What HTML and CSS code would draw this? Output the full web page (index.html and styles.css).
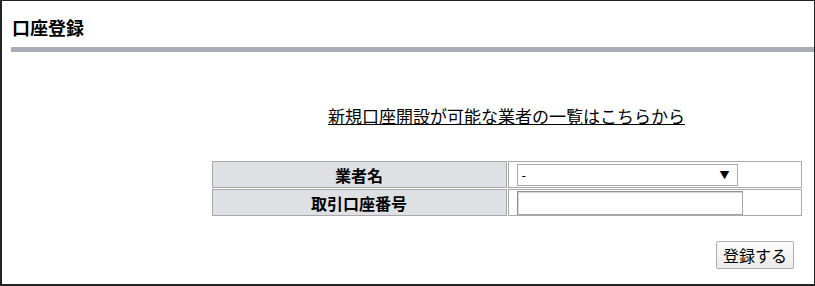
FILE: index.html
```html
<!DOCTYPE html>
<html lang="ja">
<head>
<meta charset="utf-8">
<title>口座登録</title>
<link rel="stylesheet" href="styles.css">
</head>
<body>
<div class="panel">
  <h1 class="title">口座登録</h1>
  <div class="bar"></div>
  <div class="main">
    <p class="link-row"><a class="link" href="#">新規口座開設が可能な業者の一覧はこちらから</a></p>
    <table class="form-table">
      <tr>
        <th class="label">業者名</th>
        <td class="field">
          <span class="select-wrap">
            <select class="select"><option>-</option></select>
            <span class="arrow">▼</span>
          </span>
        </td>
      </tr>
      <tr>
        <th class="label">取引口座番号</th>
        <td class="field"><input class="text-input" type="text"></td>
      </tr>
    </table>
  </div>
  <div class="actions">
    <button class="btn" type="button">登録する</button>
  </div>
</div>
</body>
</html>
```

FILE: styles.css
```css
html, body {
  margin: 0;
  padding: 0;
  background: #fff;
}

body {
  font-family: "Noto Sans CJK JP", "Noto Sans", sans-serif;
  color: #000;
}

.panel {
  box-sizing: border-box;
  width: 815px;
  height: 286px;
  border: 1px solid #222;
  border-left-width: 2px;
  border-bottom-width: 2px;
  padding: 14px 0 0 9px;
}

.title {
  margin: 0;
  padding-left: 1px;
  font-size: 18px;
  line-height: 24px;
  font-weight: bold;
}

.bar {
  margin-top: 8px;
  height: 5px;
  background: #a9acb6;
}

.main {
  margin-left: 188px;
  display: flex;
  flex-direction: column;
  align-items: center;
}

.link-row {
  margin: 52px 0 0;
  font-size: 17px;
  line-height: 24px;
}

.link {
  color: #000;
  text-decoration: underline;
}

.form-table {
  margin-top: 32px;
  width: 592px;
  border-collapse: separate;
  border-spacing: 1px;
  table-layout: fixed;
}

.label {
  width: 293px;
  height: 25px;
  padding: 0;
  background: #dfe0e4;
  border: 1px solid #a9a9a9;
  font-size: 16px;
  line-height: 20px;
  font-weight: bold;
  text-align: center;
  vertical-align: middle;
}

.field {
  height: 25px;
  padding: 0 0 0 8px;
  border: 1px solid #aaa;
  vertical-align: middle;
}

.select-wrap {
  position: relative;
  display: block;
  width: 221px;
  height: 22px;
}

.select {
  appearance: none;
  -webkit-appearance: none;
  box-sizing: border-box;
  display: block;
  width: 221px;
  height: 22px;
  margin: 0;
  padding: 0 0 0 4px;
  border: 1px solid #aaa;
  border-radius: 0;
  background: #fff;
  font-family: "Noto Sans CJK JP", sans-serif;
  font-size: 13px;
  color: #000;
}

.arrow {
  position: absolute;
  right: 8px;
  top: 4px;
  font-size: 10px;
  line-height: 14px;
  color: #000;
  pointer-events: none;
}

.text-input {
  box-sizing: border-box;
  display: block;
  width: 226px;
  height: 24px;
  margin: 0;
  padding: 0 4px;
  border: 1px solid #a5a5a5;
  border-top-color: #8f8f8f;
  border-left-color: #8f8f8f;
  box-shadow: inset 1px 1px 0 #d8d8d8;
  background: #fff;
  font-size: 13px;
}

.actions {
  display: flex;
  justify-content: flex-end;
  padding-right: 20px;
  margin-top: 24px;
}

.btn {
  box-sizing: border-box;
  width: 78px;
  height: 28px;
  margin: 0;
  padding: 0;
  border: 1px solid #adadad;
  border-radius: 2px;
  background: linear-gradient(#fdfdfd, #ebebeb);
  font-family: "Noto Sans CJK JP", sans-serif;
  font-size: 16px;
  line-height: 26px;
  color: #000;
}
```
